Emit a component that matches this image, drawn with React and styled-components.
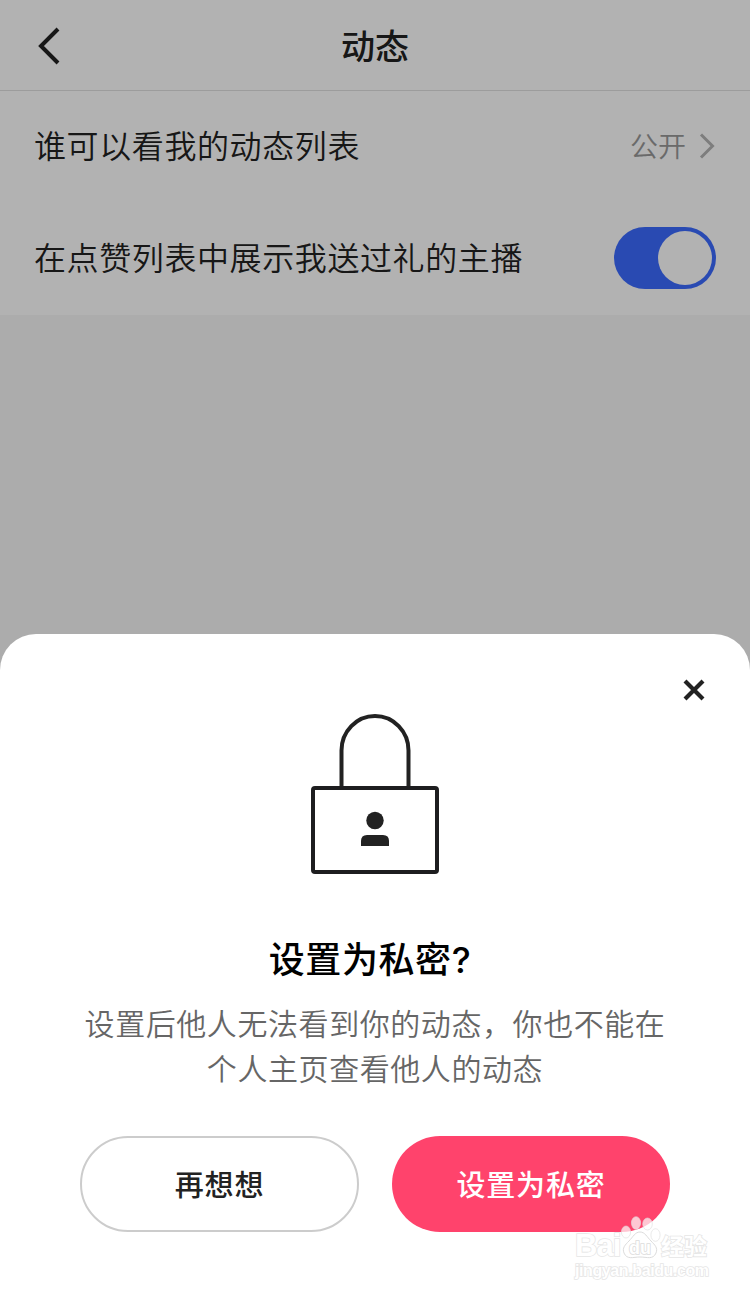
import styled, { createGlobalStyle } from "styled-components";

const GlobalStyle = createGlobalStyle`
  * {
    box-sizing: border-box;
  }
  body {
    margin: 0;
    font-family: "Noto Sans CJK SC", sans-serif;
  }
  svg {
    display: block;
  }
`;

const Page = styled.div`
  position: relative;
  display: flex;
  flex-direction: column;
  width: 750px;
  height: 1296px;
  overflow: hidden;
  background: #f7f7f7;
`;

const Header = styled.header`
  display: grid;
  grid-template-columns: 100px 1fr 100px;
  align-items: center;
  height: 91px;
  background: #fff;
  border-bottom: 1px solid #e0e0e0;
`;

const Back = styled.div`
  padding: 1px 0 0 36px;
`;

const Title = styled.h1`
  margin: 0;
  text-align: center;
  font-size: 34px;
  line-height: 50px;
  font-weight: 500;
  color: #222;
`;

const Row = styled.div`
  display: flex;
  align-items: center;
  justify-content: space-between;
  height: 112px;
  padding: 0 34px 2px;
  background: #fff;
`;

const Label = styled.span`
  padding-bottom: 4px;
  font-size: 32px;
  font-weight: 350;
  letter-spacing: 0.6px;
  color: #222;
`;

const Value = styled.span`
  display: flex;
  align-items: center;
  gap: 12px;
  font-size: 28px;
  font-weight: 350;
  color: #999;
`;

const ValueText = styled.span`
  padding-bottom: 3px;
`;

const Switch = styled.div`
  display: flex;
  justify-content: flex-end;
  width: 102px;
  height: 62px;
  padding: 4px;
  border-radius: 31px;
  background: #3c6bff;
`;

const Knob = styled.div`
  width: 54px;
  height: 54px;
  border-radius: 50%;
  background: #fff;
`;

//遮罩层，弹窗固定在底部
const Mask = styled.div`
  position: absolute;
  inset: 0;
  display: flex;
  flex-direction: column;
  justify-content: flex-end;
  background: rgba(0, 0, 0, 0.3);
`;

const Sheet = styled.section`
  display: flex;
  flex-direction: column;
  align-items: center;
  height: 662px;
  border-radius: 36px 36px 0 0;
  background: #fff;
`;

const Close = styled.div`
  align-self: flex-end;
  padding: 45px 45px 13px 0;
`;

const SheetTitle = styled.h2`
  margin: 59px 0 0;
  padding-right: 10px;
  font-family: Inter, "Noto Sans CJK SC", sans-serif;
  font-size: 36px;
  line-height: 54px;
  font-weight: 500;
  letter-spacing: 0.6px;
  color: #000;
`;

const Desc = styled.p`
  margin: 13px 0 0;
  font-size: 30px;
  font-weight: 350;
  line-height: 45px;
  letter-spacing: 0.57px;
  text-align: center;
  color: #666;
`;

const Buttons = styled.div`
  display: flex;
  gap: 33px;
  margin-top: 46px;
`;

const Button = styled.button`
  width: ${(props) => (props.$primary ? "278px" : "279px")};
  height: 96px;
  padding: 0 0 2px;
  border: ${(props) => (props.$primary ? "0" : "2px solid #ccc")};
  border-radius: 48px;
  background: ${(props) => (props.$primary ? "#ff436c" : "#fff")};
  color: ${(props) => (props.$primary ? "#fff" : "#222")};
  font-family: inherit;
  font-size: 29px;
  font-weight: 500;
  letter-spacing: 0.8px;
`;

const Watermark = styled.div`
  position: absolute;
  left: 575px;
  top: 1215px;
  width: 140px;
`;

const Brand = styled.div`
  display: flex;
  align-items: flex-end;
  height: 44px;
  margin-bottom: 3px;
`;

const Mark = styled.span`
  display: block;
  width: ${(props) => props.$width}px;
  font-family: ${(props) => props.$family};
  font-size: ${(props) => props.$size}px;
  line-height: ${(props) => props.$line}px;
  font-weight: 700;
  letter-spacing: ${(props) => props.$spacing || 0}px;
  white-space: nowrap;
  color: #fff;
  -webkit-text-stroke: 1.6px #e6e6e6;
  paint-order: stroke fill;
`;

function Paw() {
  return (
    <svg width="41" height="44" viewBox="0 0 41 44">
      <g fill="#fff" fillOpacity="0.7" stroke="#dcdcdc" strokeOpacity="0.6">
        <ellipse cx="6" cy="17" rx="4.6" ry="6" />
        <ellipse cx="16" cy="8" rx="4.6" ry="6.3" />
        <ellipse cx="27.5" cy="9" rx="4.8" ry="6" />
        <ellipse cx="35.5" cy="20" rx="4.6" ry="6.3" />
        <path
          fillOpacity="1"
          strokeOpacity="1"
          d="M20 17c-5 0-7 5-11 9-4 4-7 7-5 12 3 7 9 4 16 4s13 3 16-4c2-5-1-8-5-12-4-4-6-9-11-9z"
        />
      </g>
      <text
        x="20"
        y="38.5"
        textAnchor="middle"
        fontFamily="Liberation Sans"
        fontSize="18"
        fontWeight="700"
        fill="#fff"
        stroke="#dcdcdc"
        strokeWidth="1.6"
        paintOrder="stroke"
      >
        du
      </text>
    </svg>
  );
}

function Lock() {
  return (
    <svg width="128" height="160" viewBox="0 0 128 160" fill="none">
      <path
        d="M30.5 74V36.5a33.5 34.5 0 0 1 67 0V74"
        stroke="#222"
        strokeWidth="4"
      />
      <rect
        x="2"
        y="74"
        width="124"
        height="84"
        rx="2"
        stroke="#1d1d1f"
        strokeWidth="4"
      />
      <circle cx="64" cy="106.5" r="8.7" fill="#222" />
      <path d="M50 132v-5q0-6 6-6h16q6 0 6 6v5z" fill="#222" />
    </svg>
  );
}

export default function App() {
  return (
    <>
      <GlobalStyle />
      <Page>
        <Header>
          <Back>
            <svg width="26" height="38" viewBox="0 0 26 38" fill="none">
              <path d="M22 2L5 19 22 36" stroke="#222" strokeWidth="4" />
            </svg>
          </Back>
          <Title>动态</Title>
        </Header>
        <Row>
          <Label>谁可以看我的动态列表</Label>
          <Value>
            <ValueText>公开</ValueText>
            <svg width="18" height="26" viewBox="0 0 18 26" fill="none">
              <path d="M3 1.5L14.5 13 3 24.5" stroke="#b4b4b4" strokeWidth="3" />
            </svg>
          </Value>
        </Row>
        <Row>
          <Label>在点赞列表中展示我送过礼的主播</Label>
          <Switch>
            <Knob />
          </Switch>
        </Row>
        <Mask>
          <Sheet>
            <Close>
              <svg width="22" height="22" viewBox="0 0 22 22" fill="none">
                <path d="M2 2l18 18M20 2L2 20" stroke="#222" strokeWidth="4.2" />
              </svg>
            </Close>
            <Lock />
            <SheetTitle>设置为私密?</SheetTitle>
            <Desc>
              设置后他人无法看到你的动态，你也不能在
              <br />
              个人主页查看他人的动态
            </Desc>
            <Buttons>
              <Button>再想想</Button>
              <Button $primary>设置为私密</Button>
            </Buttons>
          </Sheet>
        </Mask>
        <Watermark>
          <Brand>
            <Mark
              $family="Liberation Sans, sans-serif"
              $size={31}
              $line={26}
              $width={45}
              $spacing={-1}
            >
              Bai
            </Mark>
            <Paw />
            <Mark
              $family="Noto Sans CJK SC, sans-serif"
              $size={23}
              $line={27}
              $width={48}
            >
              经验
            </Mark>
          </Brand>
          <Mark
            $family="Liberation Sans, sans-serif"
            $size={16}
            $line={18}
            $width={140}
            $spacing={-0.4}
          >
            jingyan.baidu.com
          </Mark>
        </Watermark>
      </Page>
    </>
  );
}
